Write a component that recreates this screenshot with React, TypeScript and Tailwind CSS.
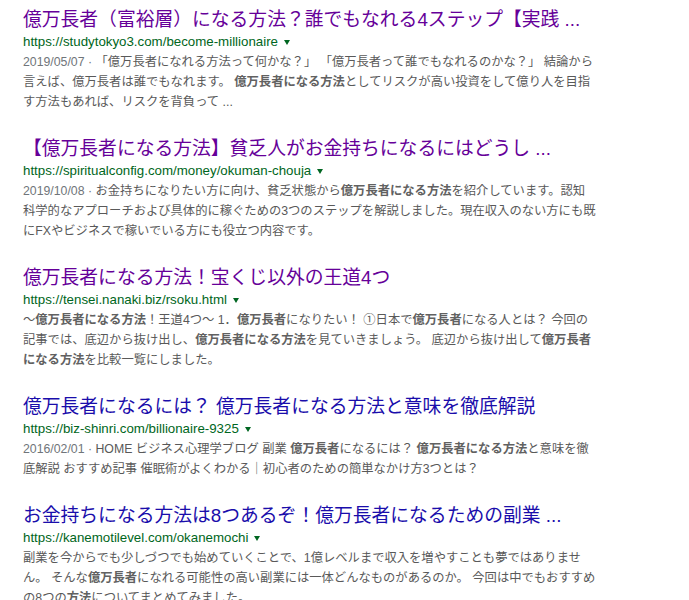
import React from "react";

type Part = string | { b: string };

type Result = {
  title: string;
  visited: boolean;
  url: string;
  date?: string;
  // snippet lines as Google wrapped them
  lines: Part[][];
};

const results: Result[] = [
  {
    title: "億万長者（富裕層）になる方法？誰でもなれる4ステップ【実践 ...",
    visited: true,
    url: "https://studytokyo3.com/become-millionaire",
    date: "2019/05/07",
    lines: [
      ["「億万長者になれる方法って何かな？」 「億万長者って誰でもなれるのかな？」 結論から"],
      [
        "言えば、億万長者は誰でもなれます。 ",
        { b: "億万長者になる方法" },
        "としてリスクが高い投資をして億り人を目指",
      ],
      ["す方法もあれば、リスクを背負って ..."],
    ],
  },
  {
    title: "【億万長者になる方法】貧乏人がお金持ちになるにはどうし ...",
    visited: true,
    url: "https://spiritualconfig.com/money/okuman-chouja",
    date: "2019/10/08",
    lines: [
      ["お金持ちになりたい方に向け、貧乏状態から", { b: "億万長者になる方法" }, "を紹介しています。認知"],
      ["科学的なアプローチおよび具体的に稼ぐための3つのステップを解説しました。現在収入のない方にも既"],
      ["にFXやビジネスで稼いでいる方にも役立つ内容です。"],
    ],
  },
  {
    title: "億万長者になる方法！宝くじ以外の王道4つ",
    visited: true,
    url: "https://tensei.nanaki.biz/rsoku.html",
    lines: [
      [
        "～",
        { b: "億万長者になる方法" },
        "！王道4つ～ 1．",
        { b: "億万長者" },
        "になりたい！ ①日本で",
        { b: "億万長者" },
        "になる人とは？ 今回の",
      ],
      [
        "記事では、底辺から抜け出し、",
        { b: "億万長者になる方法" },
        "を見ていきましょう。 底辺から抜け出して",
        { b: "億万長者" },
      ],
      [{ b: "になる方法" }, "を比較一覧にしました。"],
    ],
  },
  {
    title: "億万長者になるには？ 億万長者になる方法と意味を徹底解説",
    visited: false,
    url: "https://biz-shinri.com/billionaire-9325",
    date: "2016/02/01",
    lines: [
      [
        "HOME ビジネス心理学ブログ 副業 ",
        { b: "億万長者" },
        "になるには？ ",
        { b: "億万長者になる方法" },
        "と意味を徹",
      ],
      ["底解説 おすすめ記事 催眠術がよくわかる｜初心者のための簡単なかけ方3つとは？"],
    ],
  },
  {
    title: "お金持ちになる方法は8つあるぞ！億万長者になるための副業 ...",
    visited: false,
    url: "https://kanemotilevel.com/okanemochi",
    lines: [
      ["副業を今からでも少しづつでも始めていくことで、1億レベルまで収入を増やすことも夢ではありませ"],
      [
        "ん。 そんな",
        { b: "億万長者" },
        "になれる可能性の高い副業には一体どんなものがあるのか。 今回は中でもおすすめ",
      ],
      ["の8つの", { b: "方法" }, "についてまとめてみました。"],
    ],
  },
];

const font = "font-['Liberation_Sans','Noto_Sans_CJK_JP',sans-serif]";

function SearchResult({ r }: { r: Result }) {
  return (
    <div className="mb-[25px]">
      <h3
        className={`whitespace-nowrap text-[18.8px] font-normal leading-[23px] ${
          r.visited ? "text-[#660099]" : "text-[#1a0dab]"
        }`}
      >
        {r.title}
      </h3>
      <div className="flex items-center text-[13.3px] leading-[21px] text-[#006621]">
        <span>{r.url}</span>
        <span className="ml-[6px] mt-[1px] h-0 w-0 border-x-[3.5px] border-t-[5px] border-x-transparent border-t-[#006621]" />
      </div>
      <div className="text-[12.3px] leading-[20px] text-[#595959]">
        {r.lines.map((line, li) => (
          <div key={li} className="whitespace-pre">
            {li === 0 && r.date && (
              <span className="text-[#70757a]">{r.date} · </span>
            )}
            {line.map((p, i) =>
              typeof p === "string" ? (
                <span key={i}>{p}</span>
              ) : (
                <b key={i} className="font-bold text-[#616161]">
                  {p.b}
                </b>
              ),
            )}
          </div>
        ))}
      </div>
    </div>
  );
}

export default function App() {
  return (
    <div className={`min-h-screen bg-white pl-[23px] pt-[8px] ${font}`}>
      {results.map((r) => (
        <SearchResult key={r.url} r={r} />
      ))}
    </div>
  );
}
